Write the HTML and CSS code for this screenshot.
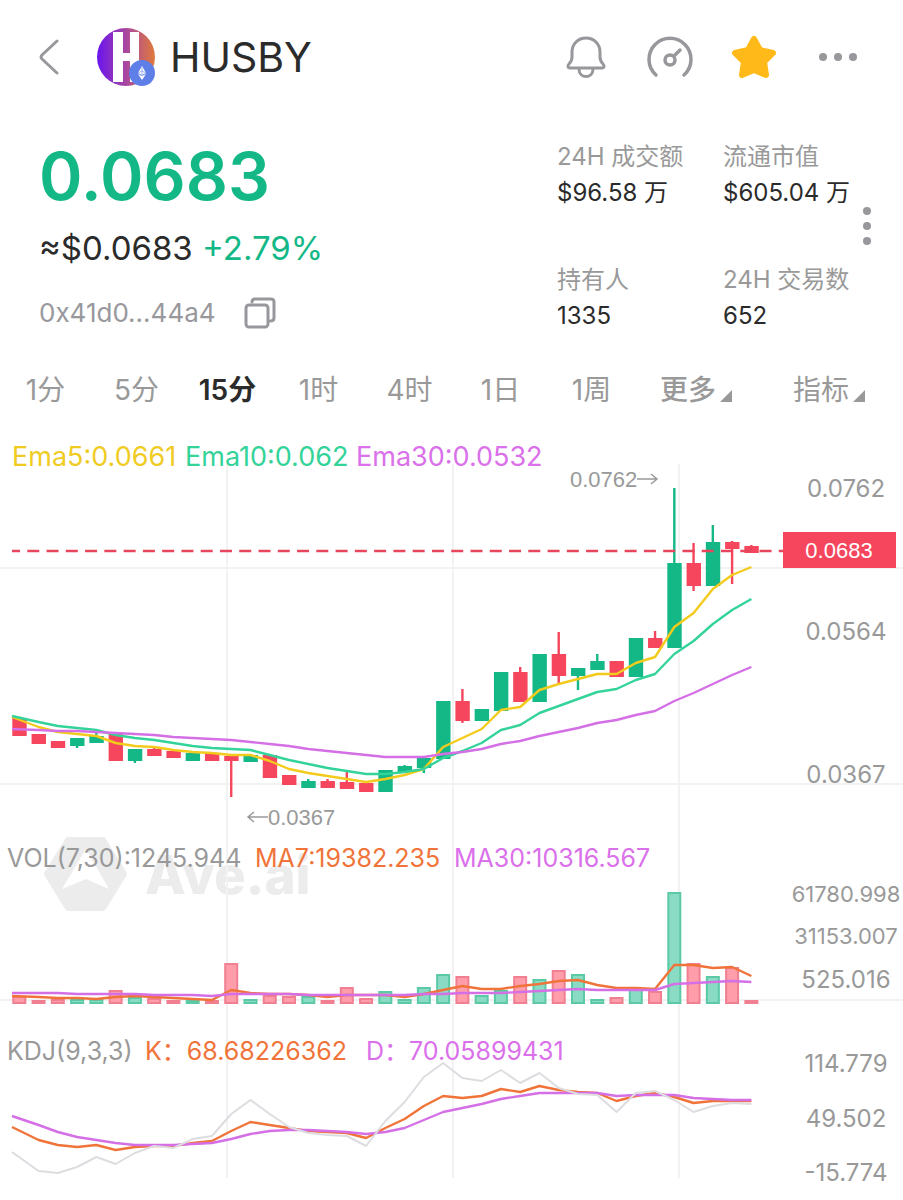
FILE: index.html
```html
<!DOCTYPE html>
<html lang="zh-CN">
<head>
    <meta charset="UTF-8">
    <meta name="viewport" content="width=device-width, initial-scale=1.0">
    <title>HUSBY</title>
    <link rel="stylesheet" href="styles.css">
</head>
<body>
    <header class="topbar">
        <button class="icon-button back" aria-label="返回">
            <svg width="20" height="36" viewBox="0 0 20 36"><path d="M18 2 L3 16 Q1 18 3 20 L18 34"/></svg>
        </button>
        <svg class="logo" width="58" height="58" viewBox="0 0 58 58">
            <defs>
                <linearGradient id="logoFill" x1="0" x2="1">
                    <stop offset="0" stop-color="#6a14ee"/>
                    <stop offset="0.5" stop-color="#a8479f"/>
                    <stop offset="1" stop-color="#e07a3c"/>
                </linearGradient>
            </defs>
            <circle cx="29" cy="29" r="29" fill="url(#logoFill)"/>
            <path d="M16 4h10v21h7V4h9v50h-9V33h-7v21H16z" fill="#fff"/>
            <circle cx="45" cy="45" r="13" fill="#5f7fe8"/>
            <path d="M45 38l4 7-4 2-4-2zM41 46l4 2 4-2-4 6z" fill="#fff"/>
            <path d="M45 38v10M41 45l4-2 4 2" fill="none" stroke="#9fb2f2" stroke-width="1"/>
        </svg>
        <h1>HUSBY</h1>
        <div class="actions">
            <button class="icon-button" aria-label="提醒">
                <svg width="48" height="48" viewBox="0 0 48 48">
                    <path d="M8 35 C6 35 5 33 7 31 Q10 28 10 24 V19 C10 11 16 5 24 5 S38 11 38 19 V24 Q38 28 41 31 C43 33 42 35 40 35 Z"/>
                    <path d="M17 36 C17 46 31 46 31 36"/>
                </svg>
            </button>
            <button class="icon-button" aria-label="行情">
                <svg class="thick" width="48" height="48" viewBox="0 0 48 48">
                    <path d="M10 42 A21 21 0 1 1 38 42"/>
                    <circle cx="24" cy="27" r="5"/>
                    <path d="M28 23 L34 17"/>
                </svg>
            </button>
            <button class="icon-button" aria-label="收藏">
                <svg class="star" width="48" height="48" viewBox="0 0 48 48"><path d="M24 6 L30 17 L43 20 L34 29 L36 42 L24 37 L12 42 L14 29 L5 20 L18 17 Z"/></svg>
            </button>
            <button class="icon-button" aria-label="更多">
                <svg class="dots" width="48" height="48" viewBox="0 0 48 48"><circle cx="9" cy="24" r="4"/><circle cx="24" cy="24" r="4"/><circle cx="39" cy="24" r="4"/></svg>
            </button>
        </div>
    </header>

    <section class="summary">
        <div class="quote">
            <div class="price">0.0683</div>
            <div class="usd">≈$0.0683 <span class="up">+2.79%</span></div>
            <div class="address">
                <span>0x41d0...44a4</span>
                <button class="icon-button" aria-label="复制">
                    <svg width="32" height="32" viewBox="0 0 32 32"><rect x="2" y="8" width="22" height="22" rx="3"/><path d="M8 5 Q8 2 11 2 H27 Q30 2 30 5 V21 Q30 24 26 24"/></svg>
                </button>
            </div>
        </div>
        <dl class="stats">
            <div><dt>24H 成交额</dt><dd>$96.58 万</dd></div>
            <div><dt>流通市值</dt><dd>$605.04 万</dd></div>
            <div><dt>持有人</dt><dd>1335</dd></div>
            <div><dt>24H 交易数</dt><dd>652</dd></div>
        </dl>
        <button class="icon-button stats-more" aria-label="更多数据">
            <svg class="dots" width="10" height="40" viewBox="0 0 10 40"><circle cx="5" cy="5" r="4"/><circle cx="5" cy="20" r="4"/><circle cx="5" cy="35" r="4"/></svg>
        </button>
    </section>

    <nav class="periods">
        <button>1分</button>
        <button>5分</button>
        <button class="active">15分</button>
        <button>1时</button>
        <button>4时</button>
        <button>1日</button>
        <button>1周</button>
        <button class="menu strong">更多</button>
        <button class="menu indicators">指标</button>
    </nav>

    <main>
        <svg class="chart" viewBox="0 430 903 770">
            <g class="watermark">
                <path d="M68 840 H103 L124 874 L103 908 H68 L47 874 Z"/>
                <path class="arrow" d="M86 849 L109 889 L86 879 L62 889 Z"/>
                <text x="145" y="894">Ave.ai</text>
            </g>
            <path class="grid" d="M227 464V1178M453 464V1178M679 464V1178M0 568H903M0 784H903M0 1000H903"/>

            <g id="candles"></g>
            <path class="last-price" d="M12 551H783"/>
            <g id="priceLines"></g>
            <g id="volumes"></g>
            <g id="volumeLines"></g>
            <g id="kdjLines"></g>

            <g class="legend large">
                <text class="yellow" x="12" y="466">Ema5:0.0661</text>
                <text class="mint" x="185" y="466">Ema10:0.062</text>
                <text class="pink" x="356" y="466">Ema30:0.0532</text>
            </g>
            <g class="legend">
                <text x="7" y="867">VOL(7,30):1245.944</text>
                <text class="orange" x="255" y="867">MA7:19382.235</text>
                <text class="pink" x="454" y="867">MA30:10316.567</text>
                <text x="7" y="1060">KDJ(9,3,3)</text>
                <text class="orange" x="145" y="1060">K：68.68226362</text>
                <text class="pink" x="366" y="1060">D：70.05899431</text>
            </g>

            <g class="extreme">
                <text x="570" y="487">0.0762</text>
                <path d="M637 479H657M651 474L657 479L651 484"/>
                <text x="268" y="825">0.0367</text>
                <path d="M268 817H248M254 812L248 817L254 822"/>
            </g>

            <g class="axis">
                <text x="846" y="497">0.0762</text>
                <text x="846" y="640">0.0564</text>
                <text x="846" y="783">0.0367</text>
                <text class="small" x="846" y="902">61780.998</text>
                <text class="small" x="846" y="944">31153.007</text>
                <text x="846" y="988">525.016</text>
                <text x="846" y="1072">114.779</text>
                <text x="846" y="1127">49.502</text>
                <text x="846" y="1181">-15.774</text>
            </g>
            <g class="tag">
                <rect x="783" y="532" width="113" height="36"/>
                <text x="839" y="558">0.0683</text>
            </g>
        </svg>
    </main>
    <script src="chart.js"></script>
</body>
</html>
```
FILE: styles.css
```css
* {
    box-sizing: border-box;
}
body {
    margin: 0;
    background-color: #fff;
    color: #2b2b2b;
    font-family: Inter, "Noto Sans CJK SC", sans-serif;
}
button {
    padding: 0;
    border: none;
    background: none;
    color: inherit;
    font: inherit;
    cursor: pointer;
}
svg {
    display: block;
}
.topbar {
    display: flex;
    align-items: center;
    height: 114px;
    padding: 0 41px 0 39px;
}
.icon-button svg {
    fill: none;
    stroke: #98989c;
    stroke-width: 3;
    stroke-linecap: round;
    stroke-linejoin: round;
}
.icon-button .thick {
    stroke-width: 3.5;
}
.icon-button .star {
    fill: #ffba1a;
    stroke: #ffba1a;
    stroke-width: 6;
}
.icon-button .dots {
    fill: #98989c;
    stroke: none;
}
.logo {
    margin-left: 38px;
}
h1 {
    margin: 0 0 0 15px;
    font-size: 41px;
    font-weight: 400;
    line-height: 56px;
}
.actions {
    display: flex;
    gap: 36px;
    margin-left: auto;
}
.summary {
    display: flex;
    padding: 25px 31px 22px 39px;
}
.quote {
    flex: 1;
}
.price {
    color: #14b886;
    font-size: 66px;
    font-weight: 600;
    line-height: 74px;
}
.usd {
    margin-top: 13px;
    font-size: 33px;
    line-height: 44px;
}
.up {
    color: #14b886;
}
.address {
    display: flex;
    align-items: center;
    gap: 28px;
    margin-top: 25px;
    color: #98989c;
    font-size: 26px;
    line-height: 36px;
}
.stats {
    display: grid;
    grid-template-columns: 166px 139px;
    align-content: start;
    row-gap: 51px;
    margin: 0;
    font-size: 24px;
    line-height: 36px;
    white-space: nowrap;
}
.stats dt {
    color: #999;
}
.stats dd {
    margin: 0;
}
.stats-more {
    align-self: flex-start;
    margin-top: 67px;
}
.periods {
    display: flex;
    padding-top: 14px;
    color: #999;
    font-size: 28px;
    line-height: 40px;
}
.periods button {
    flex: 91 1 0;
    white-space: nowrap;
}
.periods .active {
    color: #2b2b2b;
    font-weight: 600;
}
.periods .strong {
    flex-grow: 118;
    font-weight: 500;
}
.periods .indicators {
    flex-grow: 148;
}
.periods .menu::after {
    content: "";
    display: inline-block;
    margin-left: 4px;
    border-bottom: 12px solid #999;
    border-left: 12px solid transparent;
    transform: translateY(2px);
}
.chart {
    width: 100%;
    margin-top: 20px;
}
.chart text {
    fill: #999;
}
.grid {
    fill: none;
    stroke: #f2f2f3;
    stroke-width: 2;
}
.watermark path {
    fill: #ececec;
    stroke: #ececec;
    stroke-width: 6;
    stroke-linejoin: round;
}
.watermark .arrow {
    fill: #fff;
    stroke: none;
}
.chart .watermark text {
    fill: #ececec;
    font-size: 53px;
    font-weight: 800;
}
.up-bar {
    fill: #14b886;
}
.down-bar {
    fill: #f6465d;
}
.up-volume {
    fill: #89dcc3;
    stroke: #5bc9a5;
    stroke-width: 2;
}
.down-volume {
    fill: #ff9dab;
    stroke: #f07f91;
    stroke-width: 2;
}
.last-price {
    stroke: #e8465d;
    stroke-width: 2.5;
    stroke-dasharray: 12 7.27;
    stroke-dashoffset: 4;
}
.line {
    fill: none;
    stroke-width: 2.4;
    stroke-linejoin: round;
}
.line.yellow {
    stroke: #f3cb1d;
}
.line.mint {
    stroke: #33d399;
}
.line.pink {
    stroke: #d56fe6;
}
.line.orange {
    stroke: #f0743a;
}
.line.gray {
    stroke: #dddde1;
    stroke-width: 2;
}
.legend {
    font-size: 25px;
}
.legend.large {
    font-size: 27px;
}
.chart .legend .yellow {
    fill: #f0cb23;
}
.chart .legend .mint {
    fill: #33d399;
}
.chart .legend .pink {
    fill: #da70ea;
}
.chart .legend .orange {
    fill: #f0743a;
}
.extreme {
    font-family: "Liberation Sans", sans-serif;
    font-size: 22px;
}
.extreme path {
    fill: none;
    stroke: #999;
    stroke-width: 1.5;
}
.axis {
    font-size: 24px;
    text-anchor: middle;
}
.axis .small {
    font-size: 22px;
}
.tag {
    font-family: "Liberation Sans", sans-serif;
    font-size: 22px;
    text-anchor: middle;
}
.tag rect {
    fill: #f6465d;
}
.chart .tag text {
    fill: #fff;
}
```
FILE: chart.js
```js
// direction, body top, body bottom, wick top, wick bottom, volume top
const candles = [
    ['down', 718, 736, 718, 736, 996],
    ['down', 734, 744, 734, 744, 1000],
    ['down', 741, 748, 741, 748, 999],
    ['up', 738, 746, 738, 748, 999],
    ['up', 736, 743, 733, 743, 999],
    ['down', 734, 761, 734, 761, 990],
    ['up', 749, 761, 749, 763, 997],
    ['down', 749, 756, 746, 756, 998],
    ['down', 751, 758, 751, 758, 1000],
    ['up', 753, 761, 753, 761, 1000],
    ['down', 753, 761, 753, 761, 1000],
    ['down', 756, 761, 756, 797, 963],
    ['up', 755, 762, 755, 762, 999],
    ['down', 755, 778, 755, 778, 995],
    ['down', 775, 785, 775, 785, 996],
    ['up', 781, 788, 779, 788, 996],
    ['down', 781, 788, 779, 788, 1000],
    ['down', 782, 789, 771, 789, 987],
    ['down', 783, 792, 783, 792, 998],
    ['up', 770, 792, 770, 792, 991],
    ['up', 766, 772, 765, 772, 999],
    ['up', 758, 768, 758, 773, 987],
    ['up', 701, 759, 701, 759, 974],
    ['down', 701, 721, 689, 723, 976],
    ['up', 709, 721, 709, 721, 995],
    ['up', 672, 711, 672, 711, 990],
    ['down', 672, 702, 667, 702, 976],
    ['up', 654, 702, 654, 702, 979],
    ['down', 654, 676, 632, 684, 970],
    ['up', 668, 676, 668, 690, 974],
    ['up', 661, 670, 654, 670, 999],
    ['down', 661, 677, 661, 677, 997],
    ['up', 638, 677, 638, 677, 989],
    ['down', 638, 648, 631, 648, 991],
    ['up', 563, 648, 488, 648, 892],
    ['down', 563, 586, 543, 591, 963],
    ['up', 542, 586, 525, 586, 976],
    ['down', 542, 549, 541, 584, 967],
    ['down', 546, 553, 545, 553, 1000]
];

const lines = {
    priceLines: {
        yellow: [717, 727, 732, 734, 736, 743, 746, 747, 750, 752, 753, 755, 755, 761, 769, 773, 776, 779, 782, 779, 775, 769, 747, 738, 729, 710, 707, 690, 684, 679, 674, 674, 663, 657, 627, 613, 589, 575, 567],
        mint: [716, 722, 726, 728, 730, 735, 738, 740, 743, 746, 748, 749, 750, 755, 760, 764, 768, 771, 774, 774, 772, 769, 758, 751, 743, 730, 725, 713, 706, 699, 692, 689, 680, 674, 654, 641, 624, 610, 599],
        pink: [729, 730, 731, 731, 732, 733, 734, 735, 737, 738, 739, 740, 742, 744, 746, 749, 751, 753, 755, 757, 757, 757, 754, 752, 749, 744, 741, 736, 732, 728, 723, 720, 715, 711, 701, 693, 684, 675, 667]
    },
    volumeLines: {
        orange: [996, 997, 998, 998, 999, 997, 996, 997, 998, 999, 1000, 990, 993, 994, 994, 995, 997, 995, 995, 995, 997, 994, 990, 986, 989, 989, 986, 984, 981, 980, 985, 988, 988, 989, 965, 965, 968, 967, 976],
        pink: [993, 993, 993, 994, 994, 994, 994, 995, 995, 995, 996, 994, 994, 994, 994, 995, 995, 995, 995, 995, 995, 994, 994, 993, 993, 993, 992, 991, 990, 989, 990, 990, 990, 990, 984, 983, 982, 981, 982]
    },
    kdjLines: {
        orange: [1127, 1140, 1145, 1147, 1145, 1150, 1147, 1146, 1146, 1143, 1141, 1131, 1122, 1125, 1128, 1131, 1132, 1133, 1138, 1128, 1119, 1106, 1096, 1098, 1096, 1089, 1092, 1086, 1090, 1092, 1093, 1101, 1096, 1093, 1097, 1103, 1101, 1101, 1101],
        pink: [1116, 1125, 1132, 1137, 1140, 1143, 1145, 1145, 1145, 1144, 1143, 1139, 1134, 1131, 1130, 1130, 1131, 1132, 1134, 1132, 1128, 1120, 1112, 1108, 1104, 1099, 1096, 1093, 1093, 1093, 1093, 1096, 1095, 1095, 1095, 1098, 1099, 1100, 1100],
        gray: [1152, 1171, 1173, 1167, 1157, 1164, 1153, 1146, 1148, 1139, 1136, 1114, 1100, 1114, 1127, 1133, 1135, 1136, 1146, 1121, 1102, 1077, 1063, 1078, 1081, 1070, 1083, 1073, 1088, 1094, 1095, 1112, 1093, 1091, 1100, 1112, 1106, 1103, 1104]
    }
};

const step = 19.265;
const volumeBase = 1003;

function centerX(i) {
    return 19.3 + i * step;
}

function add(parentId, tag, attributes) {
    const node = document.createElementNS('http://www.w3.org/2000/svg', tag);
    for (const name in attributes) {
        node.setAttribute(name, attributes[name]);
    }
    document.getElementById(parentId).appendChild(node);
}

candles.forEach(([direction, top, bottom, high, low, volume], i) => {
    const x = centerX(i);
    add('candles', 'rect', { class: direction + '-bar', x: x - 7, y: top, width: 14.4, height: bottom - top });
    add('candles', 'rect', { class: direction + '-bar', x: x - 1.2, y: high, width: 2.4, height: low - high });
    add('volumes', 'rect', { class: direction + '-volume', x: x - 6, y: volume + 1, width: 12, height: Math.max(volumeBase - volume - 1, 1) });
});

for (const group in lines) {
    for (const color in lines[group]) {
        // the first point sits on the left edge of the plot
        const points = lines[group][color].map((y, i) => (i === 0 ? 12 : centerX(i)) + ',' + y);
        add(group, 'polyline', { class: 'line ' + color, points: points.join(' ') });
    }
}
```
